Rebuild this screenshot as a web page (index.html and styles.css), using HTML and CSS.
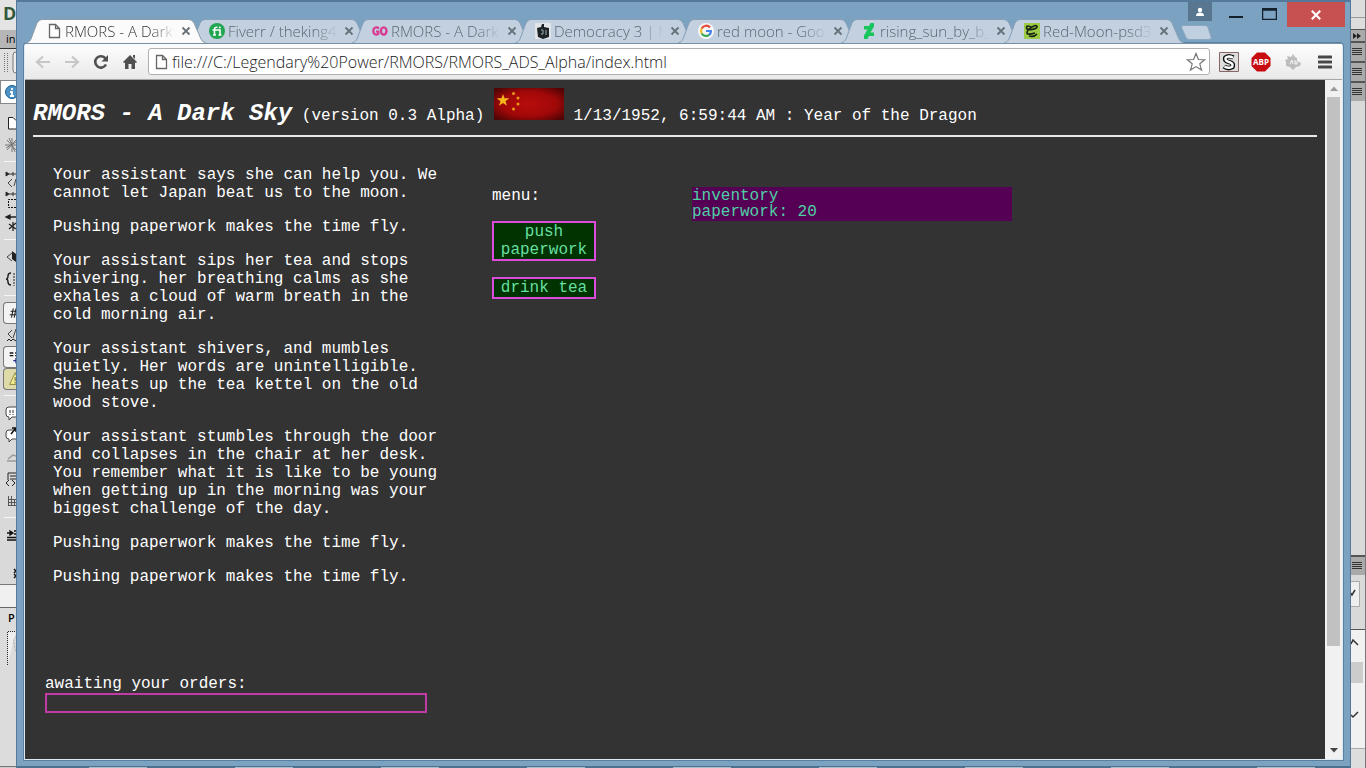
FILE: index.html
```
<!DOCTYPE html>
<html lang="en">
<head>
<meta charset="utf-8">
<title>RMORS - A Dark Sky</title>
<link rel="stylesheet" href="styles.css">
</head>
<body>
<svg class="defs" aria-hidden="true">
  <symbol id="tab" viewBox="0 0 180 24" preserveAspectRatio="none"><path d="M0 24C3 23 4 22 5 20L11 4Q13 .5 16 .5H163Q166 .5 168 4L175 20Q176 23 180 24"/></symbol>
  <symbol id="x" viewBox="0 0 10 10"><path d="M1.5 1.5l7 7M8.5 1.5l-7 7" fill="none" stroke="currentColor" stroke-width="1.8"/></symbol>
  <symbol id="page" viewBox="0 0 16 16"><path d="M3.5 1.5h6l4 4v9h-10zM9.500 1.500v4h4" fill="#fff" stroke="currentColor" stroke-width="1.300"/></symbol>
  <symbol id="lines" viewBox="0 0 10 10"><path d="M0 1.500h10M0 3.500h10M0 5.500h10M0 7.500h10" stroke="#333" fill="none"/></symbol>
</svg>
<div class="desktop">
  <aside class="left">
    <div class="brand">D</div>
    <div class="doc-tab">in</div>
    <div class="grip"><svg width="16" height="28" viewBox="0 0 16 28"><path d="M4.500 4v20M7.500 4v20" stroke="#777" stroke-dasharray="1 1"/><path d="M16 3q-3 0-3 3v15q0 3 3 3" fill="#eee" stroke="#777"/></svg></div>
    <div class="info"><svg width="16" height="24" viewBox="0 0 16 24"><circle cx="12" cy="11" r="6.500" fill="#4d92c4" stroke="#1f5f94"/><path d="M12 7v2M10 11h2v4M10 15h4" stroke="#fff" stroke-width="1.800" fill="none"/></svg></div>
    <div class="tools">
      <button aria-label="Open documents"><svg viewBox="0 0 16 22"><path d="M16 17H8.500V5.500H13l3 3" fill="#fff" stroke="#222"/></svg></button>
      <button aria-label="Snippet"><svg viewBox="0 0 16 22"><path d="M12 4v14M5 11h11M7 6l9 10M16 6L7 16M9 4l6 14M6 14l10-6" stroke="#777" fill="none"/></svg></button>
      <hr>
      <button aria-label="Collapse full tag"><svg viewBox="0 0 16 22"><path d="M6 6h10M6 4v4l3-2zM13 4v4" stroke="#333"/><path d="M12 11l-4 4 4 4M16 11l-2 7" stroke="#444" fill="none"/></svg></button>
      <button aria-label="Collapse selection"><svg viewBox="0 0 16 22"><path d="M6 4h10M6 2v4l3-2zM13 2v4" stroke="#333"/><path d="M16 9.500H8.500v8H16" stroke="#111" stroke-dasharray="2 1" fill="none"/></svg></button>
      <button aria-label="Expand all"><svg viewBox="0 0 16 22"><path d="M7 5h9M10 3v4L6 5zM13 10v9M9 12l7 5M16 11l-7 6" stroke="#222" stroke-width="1.300"/></svg></button>
      <hr>
      <button aria-label="Select parent tag"><svg viewBox="0 0 16 22"><path d="M12 7l-5 4 5 4" stroke="#444" fill="none"/><path d="M12 5l4 3v8l-4-3z" fill="#222"/></svg></button>
      <button aria-label="Balance braces"><svg viewBox="0 0 16 22"><path d="M11 5q-3 0-3 3t-2 3q2 0 2 3t3 3" stroke="#222" stroke-width="1.400" fill="none"/><path d="M14 5v13" stroke="#222" stroke-dasharray="2 1"/></svg></button>
      <hr>
      <button class="on" aria-label="Line numbers"><svg viewBox="0 0 16 22"><path d="M10 6l-2 10M13 6l-2 10M7 9h7M6 13h7" stroke="#222" stroke-width="1.200"/><path d="M13 15h3" stroke="#2a9" stroke-width="2"/></svg></button>
      <button aria-label="Highlight invalid code"><svg viewBox="0 0 16 22"><path d="M12 6l-4 4 4 4M16 5l-3 9" stroke="#444" fill="none"/><path d="M7 17l2-2 2 2 2-2 3 2" stroke="#222" fill="none"/></svg></button>
      <button class="on" aria-label="Word wrap"><svg viewBox="0 0 16 22"><path d="M6 6.500h4M12 6.500h4M6 9.500h4M12 9.500h4" stroke="#111" stroke-width="1.600"/><path d="M10 15h6M13 12v6" stroke="#228" stroke-width="1.600"/></svg></button>
      <button class="on warn" aria-label="Syntax error alerts"><svg viewBox="0 0 16 22"><path d="M12 4l5 13H6z" fill="#f4ee91" stroke="#8a8445"/><path d="M12 9v4M12 14v2" stroke="#444"/></svg></button>
      <hr>
      <button aria-label="Apply comment"><svg viewBox="0 0 16 22"><path d="M16 5H9q-3 0-3 3v4q0 3 3 3v3l3-3h4" fill="#fff" stroke="#444"/><path d="M10 8v5M13 8v5" stroke="#333" stroke-dasharray="3 1"/></svg></button>
      <button aria-label="Remove comment"><svg viewBox="0 0 16 22"><path d="M16 6H9q-3 0-3 3v3q0 3 3 3v3l3-3h4" fill="#fff" stroke="#444"/><path d="M12 4h4v4M16 4l-5 6" stroke="#111" stroke-width="1.500" fill="none"/></svg></button>
      <button aria-label="Wrap tag"><svg viewBox="0 0 16 22"><path d="M7 15h9M8 13l5-4 3 1" stroke="#999" stroke-width="1.500" fill="none"/></svg></button>
      <button aria-label="Recent snippets"><svg viewBox="0 0 16 22"><path d="M16 5H8v7M10 8h6M10 11h6" stroke="#222" fill="none"/><path d="M9 12l-3 3 3 3M12 12l3 3-3 3" stroke="#222" fill="none"/></svg></button>
      <button aria-label="Move CSS"><svg viewBox="0 0 16 22"><path d="M8.500 6v10M11.500 6v10M14.500 9v7M8 9.500h8M8 12.500h8M8 15.500h8" stroke="#555"/></svg></button>
      <hr>
      <button aria-label="Indent code"><svg viewBox="0 0 16 22"><path d="M7 9h5M10 7v4l3-2zM14 7h2M14 10h2M7 13.500h9M7 16h9" stroke="#111" stroke-width="1.300"/></svg></button>
      <button class="more" aria-label="More tools"><svg viewBox="0 0 16 22"><path d="M14 7l2 2-2 2M14 12l2 2-2 2" stroke="#111" stroke-width="1.500" fill="none"/></svg></button>
    </div>
    <div class="props"><span>P</span><svg width="16" height="40" viewBox="0 0 16 40"><path d="M7.500 37V3.500H16" fill="#eee" stroke="#222" stroke-dasharray="1 1"/><path d="M16 9q-3 2-2 7t2 8" stroke="#aaa" fill="none" stroke-dasharray="2 1"/></svg></div>
  </aside>

  <div class="window">
    <header class="tabs">
      <a class="tab active" href="#"><svg class="shape"><use href="#tab"/></svg><svg class="fav"><use href="#page"/></svg><span>RMORS - A Dark</span><svg class="close"><use href="#x"/></svg></a>
      <a class="tab" href="#"><svg class="shape"><use href="#tab"/></svg><svg class="fav" viewBox="0 0 16 16"><circle cx="8" cy="8" r="8" fill="#20a550"/><path d="M5.500 12V6.500Q5.500 4 8.500 4.300M3.500 7h7.500v5M4 12h3M9.500 12h3" stroke="#fff" stroke-width="1.600" fill="none"/><circle cx="10.800" cy="4.600" r="1" fill="#fff"/></svg><span>Fiverr / theking4</span><svg class="close"><use href="#x"/></svg></a>
      <a class="tab" href="#"><svg class="shape"><use href="#tab"/></svg><svg class="fav" viewBox="0 0 16 16"><path d="M7 5.500Q5.500 4 3.500 4.500Q1.300 5.200 1.300 8T4 11.700Q5.500 11.700 6.300 11V8.500H4" fill="none" stroke="#d83a92" stroke-width="2.200"/><ellipse cx="11.700" cy="8" rx="2.800" ry="3.600" fill="none" stroke="#d83a92" stroke-width="2.400"/></svg><span>RMORS - A Dark</span><svg class="close"><use href="#x"/></svg></a>
      <a class="tab" href="#"><svg class="shape"><use href="#tab"/></svg><svg class="fav" viewBox="0 0 16 16"><path d="M0 0h16v16H0z" fill="#e1e5e8"/><path d="M2 5l4-1 1-3h2v3l5 1v9l-6 2-5-2z" fill="#1d2226"/><path d="M6 7h2v4H6M11 7v5" stroke="#9eb0b8" fill="none"/></svg><span>Democracy 3 | M</span><svg class="close"><use href="#x"/></svg></a>
      <a class="tab" href="#"><svg class="shape"><use href="#tab"/></svg><svg class="fav" viewBox="0 0 16 16"><circle cx="8" cy="8" r="8" fill="#f8f8f8"/><g fill="none" stroke-width="2.200"><path d="M12 4.500A5 5 0 0 0 3.700 5.500" stroke="#e34a3c"/><path d="M3.700 5.500a5 5 0 0 0 0 5" stroke="#f2ba21"/><path d="M3.700 10.500a5 5 0 0 0 7.500 1.300" stroke="#3aa757"/><path d="M11.200 11.800Q13 10.300 12.900 8H8" stroke="#4585ee"/></g></svg><span>red moon - Goo</span><svg class="close"><use href="#x"/></svg></a>
      <a class="tab" href="#"><svg class="shape"><use href="#tab"/></svg><svg class="fav" viewBox="0 0 16 16"><path d="M13 0v3.500L9.500 9.500H13V13H8l-1.500 3H3v-3.500L6.500 6.500H3V3h5L9.500 0z" fill="#18c45c"/></svg><span>rising_sun_by_b_</span><svg class="close"><use href="#x"/></svg></a>
      <a class="tab" href="#"><svg class="shape"><use href="#tab"/></svg><svg class="fav" viewBox="0 0 16 16"><path d="M0 0h16v16H0z" fill="#9ccb45"/><path d="M8 4.500Q2.500 1.500 2.500 4.500T8 6.500t5-3-5 .5-5 5.500 8 .5M5 13q5 1.500 8-2" fill="none" stroke="#182412" stroke-width="1.700"/></svg><span>Red-Moon-psd3</span><svg class="close"><use href="#x"/></svg></a>
      <button class="newtab" aria-label="New tab"><svg width="32" height="15" viewBox="0 0 32 15"><path d="M3 .5h22q2 0 3 2l3 9q1 3-2 3H9q-2 0-3-2l-4-9q-1-3 1-3z" fill="#c0d0e0" stroke="#8ba7c0"/></svg></button>
      <div class="controls">
        <button class="user" aria-label="User"><svg width="24" height="21" viewBox="0 0 24 21"><circle cx="12" cy="8" r="2.200" fill="#fff"/><path d="M8 14q0-3.500 4-3.500t4 3.500z" fill="#fff"/></svg></button>
        <button class="min" aria-label="Minimize"><svg width="14" height="14" viewBox="0 0 14 14"><path d="M0 12h14" stroke="#14202b" stroke-width="2"/></svg></button>
        <button class="max" aria-label="Maximize"><svg width="15" height="12" viewBox="0 0 15 12"><path d="M.5 .5h14v11H.5zM0 2h15" fill="none" stroke="#14202b" stroke-width="1.500"/></svg></button>
        <button class="quit" aria-label="Close"><svg width="12" height="12"><use href="#x"/></svg></button>
      </div>
    </header>
    <div class="panel">
      <nav class="toolbar">
        <button aria-label="Back"><svg width="16" height="16" viewBox="0 0 16 16"><path d="M15 8H3M8 2.500L2 8l6 5.500" fill="none" stroke="#c7c7c7" stroke-width="2.200"/></svg></button>
        <button aria-label="Forward"><svg width="16" height="16" viewBox="0 0 16 16"><path d="M1 8h12M8 2.500L14 8l-6 5.500" fill="none" stroke="#c7c7c7" stroke-width="2.200"/></svg></button>
        <button aria-label="Reload"><svg width="16" height="16" viewBox="0 0 16 16"><path d="M13 10.500A5.700 5.700 0 1 1 12.500 4.500" fill="none" stroke="#505050" stroke-width="2.600"/><path d="M15 1v6.500H8.500z" fill="#505050"/></svg></button>
        <button aria-label="Home"><svg width="16" height="16" viewBox="0 0 16 16"><path d="M8 1l7 7-1 1-1-.5V15H9.500v-5h-3v5H3V8.500L2 9 1 8zM11 1h2v4l-2-2z" fill="#505050"/></svg></button>
        <label class="omnibox"><svg class="fav"><use href="#page"/></svg><input type="text" aria-label="Address" value="file:///C:/Legendary%20Power/RMORS/RMORS_ADS_Alpha/index.html"><svg width="20" height="20" viewBox="0 0 20 20"><path d="M10 1.500l2.400 6 6.300.3-4.900 4 1.700 6.300-5.500-3.500-5.500 3.500 1.700-6.300-4.900-4 6.300-.3z" fill="#fff" stroke="#777" stroke-width="1.200"/></svg></label>
        <button class="ext" aria-label="Stylish"><svg width="20" height="20" viewBox="0 0 20 20"><path d="M.5 .5h19v19H.5z" fill="#dedede" stroke="#866"/><path d="M14.500 5.500Q9.500 3 6.500 5.500Q5 9 10 10t3.500 5Q9 17.500 5 14.500" fill="none" stroke="#111" stroke-width="4.600"/><path d="M14.200 5.700Q9.500 3.200 6.700 5.700Q5.400 8.800 10 10t3.300 4.700Q9 17 5.400 14.600" fill="none" stroke="#fff" stroke-width="2.400"/></svg></button>
        <button class="ext" aria-label="Adblock Plus"><svg width="20" height="20" viewBox="0 0 20 20"><path d="M6 .5h8L19.500 6v8L14 19.500H6L.5 14V6z" fill="#c70d10"/><text x="10" y="13" text-anchor="middle" class="abp">ABP</text></svg></button>
        <button class="ext" aria-label="Extension"><svg width="18" height="18" viewBox="0 0 18 18"><path d="M3 3l4 1 2-3 2 3 2 1v3l4 2-1 3-4 1-3 3-3-3-4-1V9L1 7l3-1z" fill="#bdbdbd"/><path d="M6 11l2-4 1 4M11 7v4h2V9h-2" stroke="#f5f5f5" fill="none"/></svg></button>
        <button class="ext" aria-label="Menu"><svg width="14" height="14" viewBox="0 0 14 14"><path d="M1 2h12M1 7h12M1 12h12" stroke="#484848" stroke-width="3" stroke-linecap="round"/></svg></button>
      </nav>
      <div class="viewport">
        <main class="page">
          <div class="title">
            <h1>RMORS - A Dark Sky</h1> (version 0.3 Alpha)
            <svg class="flag" width="70" height="32" viewBox="0 0 70 32" role="img" aria-label="Flag"><defs><radialGradient id="red" cx=".5" cy=".5" r=".65"><stop offset="0" stop-color="#b80c0c"/><stop offset=".6" stop-color="#a00808"/><stop offset="1" stop-color="#500404"/></radialGradient></defs><path d="M0 0h70v32H0z" fill="url(#red)"/><path d="M9 6l1.500 4.300h4.700l-3.700 2.900 1.400 4.500L9 15l-3.900 2.700 1.400-4.500-3.700-2.900h4.700z" fill="#f5b81b"/><g fill="#e9981a"><circle cx="19.500" cy="5.500" r="1.500"/><circle cx="24" cy="10" r="1.500"/><circle cx="24" cy="16" r="1.500"/><circle cx="19.500" cy="21" r="1.500"/></g></svg>
            <time>1/13/1952, 6:59:44 AM : Year of the Dragon</time>
          </div>
          <div class="columns">
            <section class="log">
              <p>Your assistant says she can help you. We cannot let Japan beat us to the moon.</p>
              <p>Pushing paperwork makes the time fly.</p>
              <p>Your assistant sips her tea and stops shivering. her breathing calms as she exhales a cloud of warm breath in the cold morning air.</p>
              <p>Your assistant shivers, and mumbles quietly. Her words are unintelligible. She heats up the tea kettel on the old wood stove.</p>
              <p>Your assistant stumbles through the door and collapses in the chair at her desk. You remember what it is like to be young when getting up in the morning was your biggest challenge of the day.</p>
              <p>Pushing paperwork makes the time fly.</p>
              <p>Pushing paperwork makes the time fly.</p>
            </section>
            <section class="menu">
              <div>menu:</div>
              <button>push paperwork</button>
              <button>drink tea</button>
            </section>
            <section class="inventory"><div>inventory</div><div>paperwork: 20</div></section>
          </div>
          <form class="orders">
            <label for="order">awaiting your orders:</label>
            <input id="order" type="text">
          </form>
        </main>
        <div class="scrollbar">
          <svg width="8" height="5" viewBox="0 0 8 5"><path d="M0 5l4-4.500L8 5z" fill="#999"/></svg>
          <div class="track"><div class="thumb"></div></div>
          <svg width="8" height="5" viewBox="0 0 8 5"><path d="M0 0l4 4.500L8 0z" fill="#444"/></svg>
        </div>
      </div>
    </div>
  </div>

  <aside class="right">
    <div class="top"></div>
    <div class="bar"><svg width="10" height="8" viewBox="0 0 10 8"><path d="M1 1l4 3-4 3zM5 1l4 3-4 3z" fill="#222"/></svg></div>
    <div class="bar tall"><svg width="10" height="10"><use href="#lines"/></svg></div>
    <div class="bar tall"><svg width="10" height="10"><use href="#lines"/></svg></div>
    <div class="bar tall"><svg width="10" height="10"><use href="#lines"/></svg></div>
    <div class="space"></div>
    <div class="bar tall"><svg width="10" height="10"><use href="#lines"/></svg></div>
    <div class="pick"><svg width="9" height="26" viewBox="0 0 9 26"><path d="M0 .5h8.500v25H0" fill="#eee" stroke="#aaa"/><path d="M0 12l1 2 3-5" fill="none" stroke="#333" stroke-width="1.500"/></svg></div>
    <div class="list"><svg width="12" height="116" viewBox="0 0 12 116"><path d="M0 14l2-4 5 5M0 85l2 2 5-5" fill="none" stroke="#333" stroke-width="1.500"/><path d="M0 32h12v21H0z" fill="#ccc"/></svg></div>
    <div class="foot"></div>
  </aside>
</div>
</body>
</html>
```
FILE: styles.css
```
* { box-sizing: border-box; }
body { margin: 0; font-family: "Open Sans", "Noto Sans", sans-serif; }
button { margin: 0; padding: 0; border: 0; background: none; font: inherit; color: inherit; }
svg { flex: none; }
.defs { position: absolute; width: 0; height: 0; }
.desktop { display: flex; height: 100vh; overflow: hidden; background: #d9d9d9; }

.left { width: 16px; flex: none; overflow: hidden; display: flex; flex-direction: column; background: #d9d9d9; }
.brand { height: 30px; padding-left: 3px; font-size: 18px; font-weight: 700; line-height: 26px; color: #34583b; background: #e4e4e4; }
.doc-tab { height: 19px; padding-left: 6px; font-size: 11px; line-height: 18px; background: #b6b6b6; border-bottom: 1px solid #333; white-space: nowrap; }
.grip { height: 31px; background: #e0e0e0; }
.info { height: 24px; background: #fff; border: 1px solid #888; border-right: 0; }
.info svg { margin-left: -1px; }
.tools { flex: 1; padding-top: 8px; border-bottom: 1px solid #777; }
.tools button { display: block; width: 16px; height: 22px; }
.tools button svg { display: block; width: 16px; height: 22px; }
.tools .on { padding-left: 3px; }
.tools .on svg { margin-left: 0; width: 16px; background: #f3f3f3; border: 1px solid #777; border-right: 0; border-radius: 4px 0 0 4px; }
.tools .warn svg { background: #dedba9; }
.tools .more { margin-top: 16px; }
.tools hr { margin: 5px 0 6px 4px; height: 1px; border: 0; background: #f5f5f5; }
.props { height: 184px; padding-top: 22px; background: linear-gradient(#f0f0f0 0 22px, #666 22px 23px, #dcdcdc 23px 181px, #777 181px 182px, #ccc 182px); font-size: 11px; font-weight: 600; }
.props span { display: block; padding-left: 8px; line-height: 21px; white-space: nowrap; }

.window {
  flex: 1;
  min-width: 0;
  display: flex;
  flex-direction: column;
  padding: 0 7px 8px;
  background:
    repeating-linear-gradient(to right, transparent 0 72px, #a9bccb 72px 130px, transparent 130px 146px) bottom / 100% 1px no-repeat,
    linear-gradient(#4c7290, #4c7290) bottom / 100% 2px no-repeat,
    #7ba2c0;
  border: 1px solid #54799a;
  border-top-width: 2px;
  border-bottom: 0;
}
.tabs { display: flex; height: 41px; padding: 17px 0 0 2px; }
.tab { position: relative; display: flex; align-items: center; flex: 0 1 180px; min-width: 0; height: 24px; padding: 0 15px 0 20px; margin-right: -17px; color: #5c6770; font-size: 15px; text-decoration: none; }
.tab.active { z-index: 1; color: #333; }
.shape { position: absolute; inset: 0; width: 100%; height: 100%; fill: #c2d0df; stroke: #87a0b8; }
.active .shape { fill: #fbfbfb; stroke: #8c9caa; }
.fav { position: relative; width: 16px; height: 16px; margin-right: 3px; color: #666; }
.tab span { position: relative; flex: 1; min-width: 0; overflow: hidden; white-space: nowrap; font-weight: 300; line-height: 24px; -webkit-mask: linear-gradient(to right, #000 78%, transparent); mask: linear-gradient(to right, #000 78%, transparent); }
.close { position: relative; width: 10px; height: 10px; margin-left: 6px; color: #66717a; }
.newtab { flex: none; align-self: flex-start; margin: 6px auto 0 13px; height: 15px; }
.newtab svg, .controls svg { display: block; }
.controls { position: relative; display: flex; flex: none; align-self: flex-start; margin: -17px -2px 0 -60px; }
.user { height: 19px; margin-right: 17px; background: #587690; }
.min { height: 19px; margin-right: 19px; }
.max { height: 24px; margin-right: 10px; }
.quit { display: flex; align-items: center; justify-content: center; width: 58px; height: 25px; color: #fff; background: #c75050; }

.panel { flex: 1; min-height: 0; display: flex; flex-direction: column; border: 1px solid #dfe9f2; border-top-color: #7890a6; outline: 1px solid #5b7f9f; border-radius: 3px 3px 0 0; background: #eee; }
.toolbar { display: flex; align-items: center; height: 36px; padding: 0 7px 0 10px; background: linear-gradient(#fdfdfd, #e9e9e9); border-bottom: 1px solid #a6a6a6; }
.toolbar button { display: flex; width: 16px; justify-content: center; margin-right: 13px; }
.toolbar button:nth-of-type(4) { margin-right: 10px; }
.omnibox { flex: 1; display: flex; align-items: center; height: 27px; padding: 0 3px 0 4px; margin-right: 9px; border: 1px solid #b0b0b0; border-radius: 3px; background: #fff; }
.omnibox input { flex: 1; min-width: 0; padding: 0; border: 0; outline: 0; background: none; color: #222; font: 300 16px/24px "Open Sans", "Noto Sans", sans-serif; }
.toolbar .ext { width: 20px; margin-right: 12px; }
.toolbar .ext:last-child { margin-right: 0; }
.abp { font: 700 8px "Open Sans", sans-serif; fill: #fff; }

.viewport { flex: 1; min-height: 0; display: flex; }
.page { flex: 1; min-width: 0; display: flex; flex-direction: column; padding: 8px; background: #333; color: #fff; font: 16px/18px "Liberation Mono", "Courier New", monospace; }
.title { height: 49px; border-bottom: 2px solid #e8e8e8; white-space: nowrap; }
.title h1 { display: inline; font-size: 24px; font-style: italic; font-weight: 700; }
.columns { flex: 1; display: flex; align-items: flex-start; padding: 29px 0 0 20px; }
.log { width: 400px; margin-right: 39px; }
.log p { margin: 0 0 16px; }
.menu { display: flex; flex-direction: column; gap: 16px; width: 104px; margin: 21px 96px 0 0; }
.menu button { padding: 0 4px; border: 2px solid #dd4bdd; background: #003300; color: #66dfa0; }
.inventory { width: 320px; margin-top: 21px; padding: 1px 0; background: #550055; color: #4fd0a4; line-height: 16px; }
.orders { display: flex; flex-direction: column; width: 382px; margin: 0 0 38px 12px; }
.orders input { height: 20px; padding: 0 4px; border: 2px solid #c23aa6; background: #333; color: #fff; outline: 0; font: inherit; }
.scrollbar { display: flex; flex-direction: column; align-items: center; width: 17px; padding: 6px 2px; background: #f1f1f1; }
.track { flex: 1; width: 13px; margin: 6px 0 5px; }
.thumb { height: 85%; background: #c1c1c1; }

.right { width: 15px; flex: none; display: flex; flex-direction: column; border-right: 1px solid #777; background: #d9d9d9; }
.top { height: 29px; flex: none; background: linear-gradient(#ddd 0 17px, #999 17px 18px, #ddd 18px); }
.bar { height: 12px; padding-left: 1px; display: flex; align-items: center; background: #aaa; border-top: 1px solid #555; }
.bar.tall { height: 20px; border-top-width: 2px; }
.space { flex: 1; }
.pick { height: 55px; padding-top: 6px; border-bottom: 1px solid #555; }
.list { height: 118px; background: #f1f1f1; }
.foot { height: 20px; background: #ddd; border-top: 1px solid #aaa; }
```
